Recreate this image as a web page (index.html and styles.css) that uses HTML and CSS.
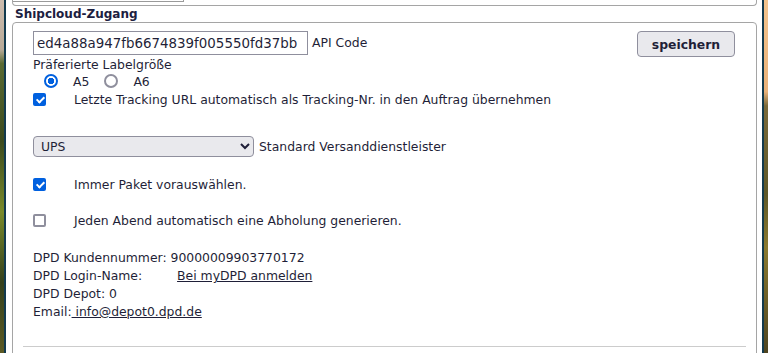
FILE: index.html
```
<!DOCTYPE html>
<html lang="de">
<head>
    <meta charset="UTF-8">
    <meta name="viewport" content="width=device-width, initial-scale=1.0">
    <title>Shipcloud-Zugang</title>
    <link rel="stylesheet" href="styles.css">
</head>
<body>
    <div class="screen">
        <div class="photo photo-left"></div>
        <div class="frame">
            <div class="prev-box"><span class="prev-input"></span></div>
            <div class="section-title">Shipcloud-Zugang</div>
            <div class="panel">
                <div class="api-row">
                    <input type="text" class="api-code" value="ed4a88a947fb6674839f005550fd37bb">
                    <span class="api-label">API Code</span>
                    <button class="save">speichern</button>
                </div>
                <div class="size-label">Präferierte Labelgröße</div>
                <div class="radio-row">
                    <label class="radio"><input type="radio" name="size" checked><span>A5</span></label>
                    <label class="radio"><input type="radio" name="size"><span>A6</span></label>
                </div>
                <label class="check first"><input type="checkbox" checked><span>Letzte Tracking URL automatisch als Tracking-Nr. in den Auftrag übernehmen</span></label>

                <div class="carrier-row">
                    <select class="carrier">
                        <option>UPS</option>
                        <option>DHL</option>
                        <option>DPD</option>
                        <option>Hermes</option>
                    </select>
                    <span>Standard Versanddienstleister</span>
                </div>

                <label class="check spaced"><input type="checkbox" checked><span>Immer Paket vorauswählen.</span></label>
                <label class="check spaced"><input type="checkbox"><span>Jeden Abend automatisch eine Abholung generieren.</span></label>

                <div class="dpd-info">
                    <div>DPD Kundennummer: 90000009903770172</div>
                    <div>DPD Login-Name: <a href="#" class="login-link">Bei myDPD anmelden</a></div>
                    <div>DPD Depot: 0</div>
                    <div>Email:<a href="#"> info@depot0.dpd.de</a></div>
                </div>
                <hr class="divider">
            </div>
        </div>
        <div class="photo photo-right"></div>
    </div>
</body>
</html>
```

FILE: styles.css
```
body {
    margin: 0;
    font-family: "DejaVu Sans", Verdana, sans-serif;
    font-size: 12.4px;
    color: #1f1f38;
}

.screen {
    display: flex;
    height: 353px;
    overflow: hidden;
}

.photo {
    width: 4px;
    flex-shrink: 0;
}

.photo-left {
    background: linear-gradient(180deg, #cdbcae 0%, #b8aa98 14%, #5a6a32 18%, #3c4a1e 40%, #7a8a2a 60%, #35401c 80%, #5c5a24 100%);
}

.photo-right {
    background: linear-gradient(180deg, #f3c48e 0%, #e9b27a 26%, #7a6a3a 30%, #5e5828 55%, #8a7a30 70%, #4e4420 100%);
}

.frame {
    flex: 1;
    background: #fff;
    border-left: 2px solid #123a4e;
    border-right: 2px solid #123a4e;
    overflow: hidden;
}

/* Rest der vorherigen Box oben */
.prev-box {
    height: 5px;
    margin: 0 5px 0 6px;
    border: 1px solid #a5a5a5;
    border-top: 0;
    border-radius: 0 0 4px 4px;
}

.prev-input {
    display: block;
    width: 170px;
    height: 1px;
    border-bottom: 1px solid #9a9a9a;
    border-right: 1px solid #9a9a9a;
}

.section-title {
    font-weight: 700;
    font-size: 12px;
    color: #1c2040;
    line-height: 16px;
    padding-left: 9px;
}

.panel {
    margin: 0 5px 0 6px;
    border: 1px solid #a5a5a5;
    border-radius: 4px;
    padding: 8px 21px 0 20px;
    height: 400px;
}

.api-row {
    display: flex;
    align-items: flex-start;
    height: 26px;
}

.api-code {
    width: 275px;
    height: 24px;
    box-sizing: border-box;
    padding: 0 3px;
    border: 1px solid #8f8f9d;
    font-family: "DejaVu Sans", Verdana, sans-serif;
    font-size: 13.4px;
    color: #1f1f38;
}

.api-label {
    margin-left: 4px;
    line-height: 24px;
}

.save {
    margin-left: auto;
    width: 98px;
    height: 26px;
    background: #e9e9ed;
    border: 1px solid #8f8f9d;
    border-radius: 4px;
    font-family: "DejaVu Sans", Verdana, sans-serif;
    font-size: 12.4px;
    font-weight: 700;
    color: #1f1f38;
    padding: 0;
}

.size-label {
    line-height: 15px;
}

.radio-row {
    display: flex;
    height: 18px;
    align-items: center;
    padding-left: 11px;
}

.radio {
    display: flex;
    align-items: center;
    margin-right: 15px;
}

.radio input {
    appearance: none;
    margin: 0 15px 0 0;
    width: 14px;
    height: 14px;
    border: 2px solid #8f8f9d;
    border-radius: 50%;
    box-sizing: border-box;
    background: #fff;
}

.radio input:checked {
    border-color: #0060df;
    background: radial-gradient(circle, #0060df 0 3px, #fff 3.5px);
}

.check {
    display: flex;
    align-items: center;
    height: 18px;
}

.check input {
    appearance: none;
    position: relative;
    margin: 0 28px 0 0;
    width: 13px;
    height: 13px;
    border: 2px solid #8f8f9d;
    border-radius: 2px;
    box-sizing: border-box;
    background: #fff;
}

.check input:checked {
    border-color: #0060df;
    background: #0060df;
}

.check input:checked::after {
    content: "";
    position: absolute;
    left: 3px;
    top: 0px;
    width: 3px;
    height: 6px;
    border: solid #fff;
    border-width: 0 2px 2px 0;
    transform: rotate(45deg);
}

.spaced {
    margin-top: 18px;
}

.carrier-row {
    display: flex;
    align-items: center;
    margin-top: 28px;
    height: 21px;
}

.carrier {
    width: 221px;
    height: 21px;
    margin: 0 5px 0 0;
    padding: 0 0 0 3px;
    background: #e9e9ed;
    border: 1px solid #8f8f9d;
    border-radius: 4px;
    font-family: "DejaVu Sans", Verdana, sans-serif;
    font-size: 12.4px;
    color: #1f1f38;
}

.dpd-info {
    margin-top: 20px;
    line-height: 18px;
}

.dpd-info a {
    color: #1f1f38;
}

.login-link {
    margin-left: 31px;
}

.divider {
    margin: 25px -11px 0 -10px;
    border: 0;
    border-top: 1px solid #cccccc;
}
```
